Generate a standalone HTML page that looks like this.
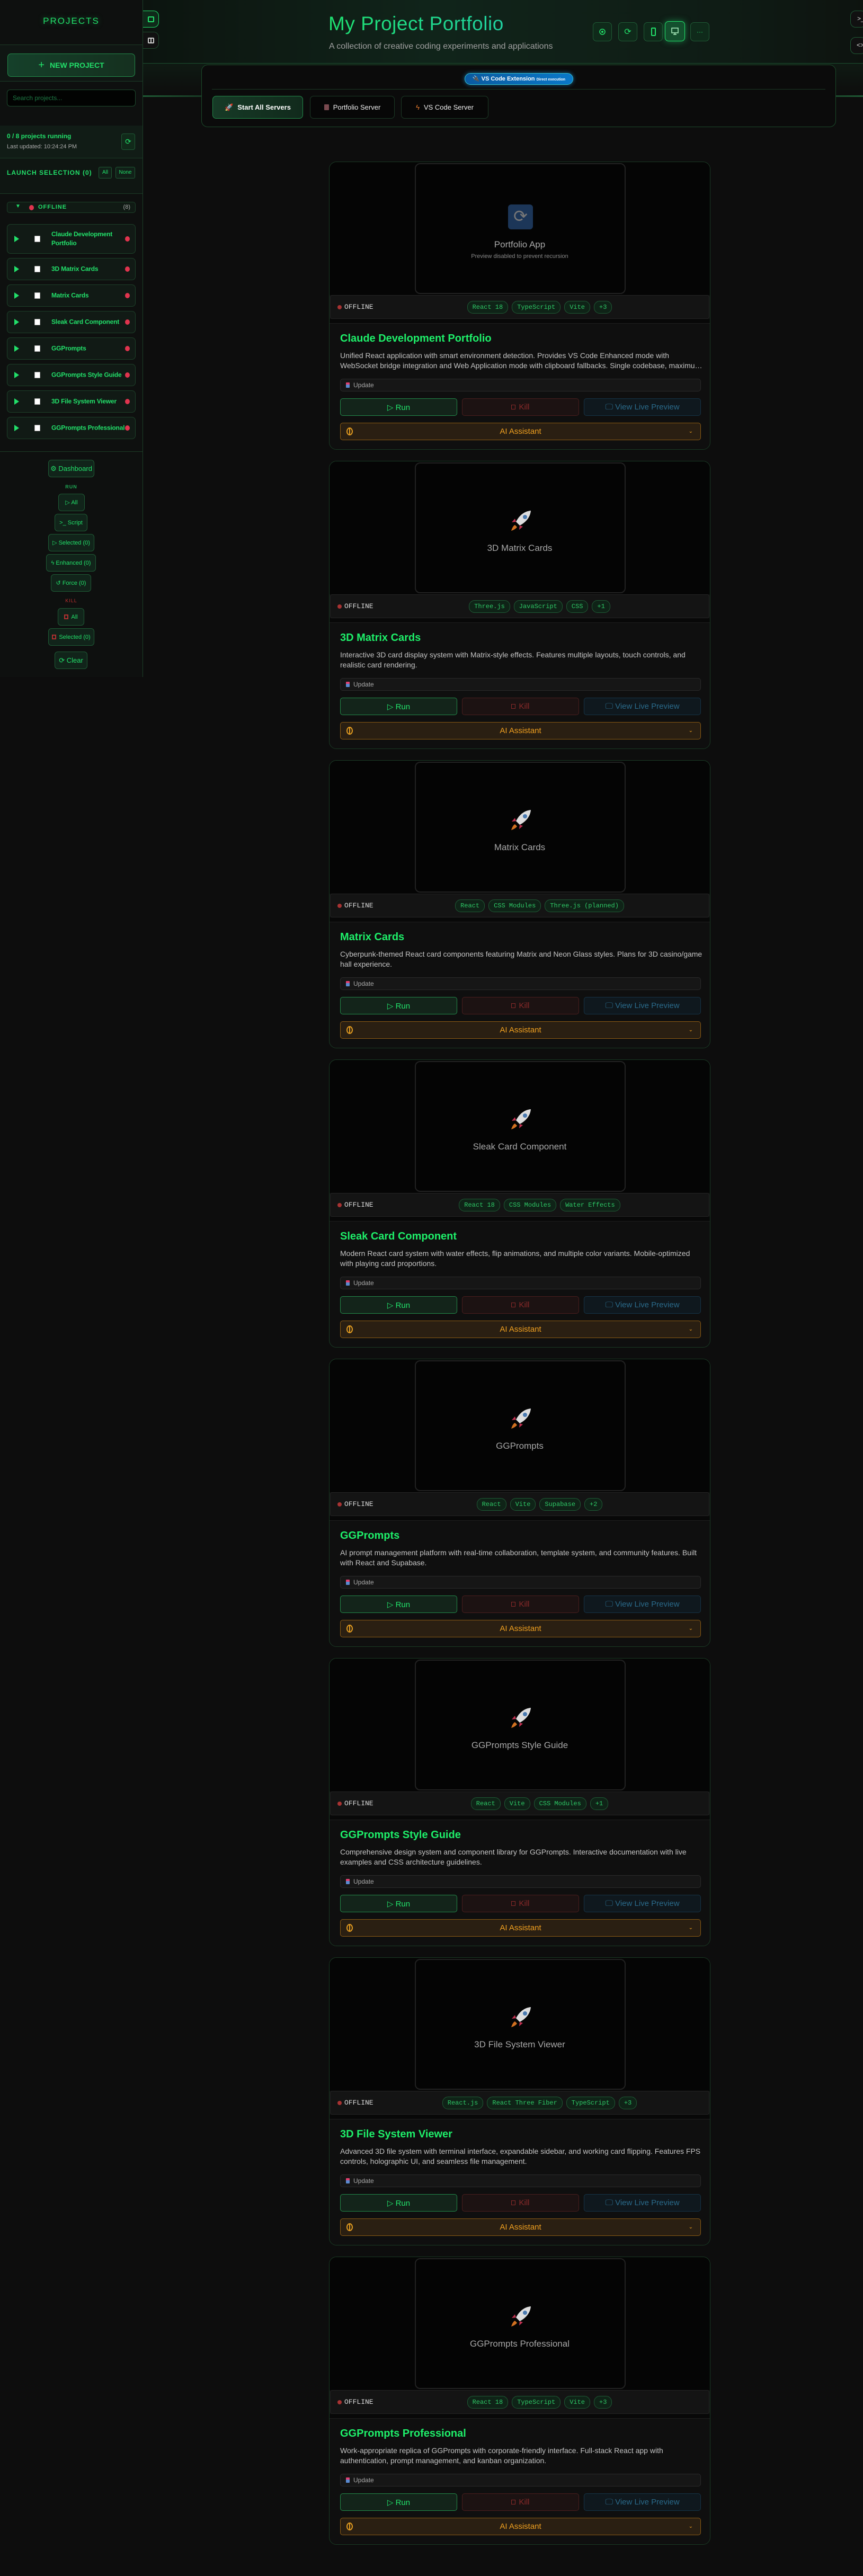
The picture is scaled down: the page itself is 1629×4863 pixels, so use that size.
<!DOCTYPE html>
<html><head><meta charset="utf-8">
<style>
*{box-sizing:border-box;margin:0;padding:0}
html,body{width:1629px;height:4863px;background:#0d0d0d;font-family:"Liberation Sans",sans-serif;overflow:hidden;position:relative}
.abs{position:absolute}
#side{left:0;top:0;width:270px;height:1278px;background:#0e100f;border-right:1px solid #1c4028}
.hl{position:absolute;left:0;width:269px;height:1px;background:#1c3a26}
.sbtn{position:absolute;border:1px solid #1f5a35;background:#11241a;border-radius:6px;color:#22e06a;font-size:13px;display:flex;align-items:center;justify-content:center;gap:5px}
.item{position:absolute;left:13px;width:243px;border:1px solid #1d4029;background:#111a15;border-radius:7px}
.item .pl{position:absolute;left:13px;top:50%;margin-top:-6px;width:0;height:0;border-left:9px solid #22e06a;border-top:6px solid transparent;border-bottom:6px solid transparent}
.item .cb{position:absolute;left:38px;top:50%;margin-top:-6px;width:11px;height:12px;background:#fff;border:1px solid #aaa;border-radius:1px}
.item .nm{position:absolute;left:70px;top:50%;transform:translateY(-50%);color:#22e06a;font-size:12px;font-weight:bold;line-height:17px;width:150px;white-space:nowrap;letter-spacing:-0.2px}
.item .rd{position:absolute;top:50%;margin-top:-5px;width:9px;height:10px;border-radius:50%;background:#e0344e;right:10px}
.card{position:absolute;left:621px;width:720px;height:544px;border:1px solid #1a3a24;border-radius:14px;background:#0f0f0f;overflow:hidden}
.pv{position:absolute;left:0;top:0;width:100%;height:251px;background:#050505}
.fr{position:absolute;left:161px;top:2px;width:398px;height:247px;border:2px solid #222;border-radius:10px;background:#040404}
.pname{position:absolute;left:0;width:100%;text-align:center;color:#a8a8a8;font-size:17px}
.sb{position:absolute;left:1px;right:1px;top:251px;height:45px;background:#141414;border:1px solid #242424;border-radius:4px}
.off{position:absolute;left:13px;top:14px;color:#ddd;font-family:"Liberation Mono",monospace;font-size:13px;display:flex;align-items:center;gap:5px}
.off i{display:inline-block;width:8px;height:8px;border-radius:50%;background:#a83232}
.tags{position:absolute;left:75px;right:0;top:10px;display:flex;justify-content:center;gap:7px}
.tag{height:24px;line-height:22px;padding:0 9px;border:1px solid #1f5a35;background:#0f2317;border-radius:11px;color:#2ec866;font-family:"Liberation Mono",monospace;font-size:12px}
.gap{position:absolute;left:0;right:0;top:296px;height:9px;background:#080808;border-bottom:1px solid #1e1e1e}
.ttl{position:absolute;left:20px;top:322px;color:#1ef06a;font-size:20px;font-weight:bold}
.ds{position:absolute;left:20px;width:685px;top:356px;color:#c4c4c4;font-size:14px;line-height:19px}
.ds div{white-space:nowrap;overflow:hidden;text-overflow:ellipsis}
.up{position:absolute;left:20px;width:681px;top:409px;height:24px;border:1px solid #2a2a2a;background:#161616;border-radius:5px;color:#aaa;font-size:12px;line-height:22px;padding-left:24px}
.up:before{content:"";position:absolute;left:10px;top:6px;width:7px;height:10px;background:linear-gradient(#e04070 40%,#5a8ad0 40%);border-radius:1px}
.bt{position:absolute;top:446px;height:33px;width:221px;border-radius:5px;display:flex;align-items:center;justify-content:center;gap:6px;font-size:15px}
.run{left:20px;border:1px solid #238a4a;background:#13241a;color:#22e06a}
.kill{left:250px;border:1px solid #4a1e1e;background:#1c1212;color:#8a2a2a}
.view{left:480px;border:1px solid #163447;background:#0f181e;color:#2a6a8a}
.ai{position:absolute;left:20px;width:681px;top:492px;height:33px;border:1px solid #8a5a14;background:#2a1f12;border-radius:5px;color:#f0a020;font-size:15px;text-align:center;line-height:31px}
.ai .b{position:absolute;left:11px;top:8px;width:12px;height:15px;border:2px solid #e09a20;border-radius:50%}
.ai .b:after{content:"";position:absolute;left:3px;top:0;width:2px;height:11px;background:#e09a20}
.ai .ch{position:absolute;right:14px;top:0;font-size:10px}
.hbtn{position:absolute;top:42px;width:36px;height:36px;border:1px solid #1f5a35;background:#0f2a1a;border-radius:7px;display:flex;align-items:center;justify-content:center}
.item .cb{left:38px}
</style></head><body>

<div class="abs" style="left:270px;top:0;width:1359px;height:120px;background:linear-gradient(90deg,#0c140f,#10241a 40%,#0f1c15 80%,#0d130f);border-bottom:1px solid #1c5030"></div>
<div class="abs" style="left:270px;top:120px;width:1359px;height:60px;background:linear-gradient(#0f1a13,#0d0d0d)"></div>
<div class="abs" style="left:270px;top:180px;width:1359px;height:3px;background:linear-gradient(90deg,#1f5a35,#0d0d0d 20%,#0d0d0d 80%,#1f5a35)"></div>

<div id="side" class="abs">
  <div class="abs" style="left:0;top:30px;width:269px;text-align:center;color:#22e06a;font-size:17px;letter-spacing:2px;text-shadow:0 0 10px #1a6a3a">PROJECTS</div>
  <div class="hl" style="top:84px"></div>
  <div class="abs" style="left:0;top:85px;width:269px;height:68px;background:#101613"></div>
  <div class="abs" style="left:14px;top:101px;width:241px;height:44px;border:1px solid #238a4a;border-radius:7px;background:linear-gradient(90deg,#15402a,#15301f);color:#22e06a;font-weight:bold;font-size:14px;display:flex;align-items:center;justify-content:center;gap:10px"><span style="font-size:20px;font-weight:normal">+</span>NEW PROJECT</div>
  <div class="hl" style="top:153px"></div>
  <div class="abs" style="left:13px;top:169px;width:243px;height:32px;border:1px solid #1d4a2e;border-radius:6px;background:#020302;color:#1e7a45;font-size:12px;line-height:30px;padding-left:10px">Search projects...</div>
  <div class="abs" style="left:0;top:237px;width:269px;height:61px;background:#111c16"></div>
  <div class="abs" style="left:13px;top:250px;color:#22e06a;font-size:12px;font-weight:bold">0 / 8 projects running</div>
  <div class="abs" style="left:13px;top:271px;color:#aaa;font-size:11px">Last updated: 10:24:24 PM</div>
  <div class="abs" style="left:229px;top:252px;width:26px;height:31px;border:1px solid #1f5a35;border-radius:4px;background:#112a1a;color:#22e06a;font-size:14px;text-align:center;line-height:29px">⟳</div>
  <div class="hl" style="top:298px"></div>
  <div class="abs" style="left:0;top:299px;width:269px;height:66px;background:#0f1612"></div>
  <div class="abs" style="left:13px;top:319px;color:#22e06a;font-size:12px;font-weight:bold;letter-spacing:1px">LAUNCH SELECTION (0)</div>
  <div class="abs" style="left:186px;top:315px;width:25px;height:22px;border:1px solid #1f5a35;border-radius:3px;background:#112018;color:#22e06a;font-size:10px;text-align:center;line-height:20px">All</div>
  <div class="abs" style="left:218px;top:315px;width:37px;height:22px;border:1px solid #1f5a35;border-radius:3px;background:#112018;color:#22e06a;font-size:10px;text-align:center;line-height:20px">None</div>
  <div class="hl" style="top:365px"></div>
  <div class="abs" style="left:13px;top:381px;width:243px;height:21px;border:1px solid #1d4029;border-radius:5px;background:#101a14">
    <span class="abs" style="left:15px;top:2px;color:#22e06a;font-size:10px">▼</span>
    <span class="abs" style="left:41px;top:5px;width:9px;height:10px;border-radius:50%;background:#e0344e"></span>
    <span class="abs" style="left:58px;top:3px;color:#22e06a;font-size:11px;font-weight:bold;letter-spacing:1px">OFFLINE</span>
    <span class="abs" style="right:9px;top:3px;color:#aaa;font-size:11px">(8)</span>
  </div>
  <div class="item" style="top:423px;height:56px"><i class="pl"></i><i class="cb"></i><div class="nm" style="white-space:normal;width:130px">Claude Development Portfolio</div><i class="rd"></i></div>
  <div class="item" style="top:487px;height:42px"><i class="pl"></i><i class="cb"></i><div class="nm">3D Matrix Cards</div><i class="rd"></i></div>
  <div class="item" style="top:537px;height:42px"><i class="pl"></i><i class="cb"></i><div class="nm">Matrix Cards</div><i class="rd"></i></div>
  <div class="item" style="top:587px;height:42px"><i class="pl"></i><i class="cb"></i><div class="nm">Sleak Card Component</div><i class="rd"></i></div>
  <div class="item" style="top:637px;height:42px"><i class="pl"></i><i class="cb"></i><div class="nm">GGPrompts</div><i class="rd"></i></div>
  <div class="item" style="top:687px;height:42px"><i class="pl"></i><i class="cb"></i><div class="nm">GGPrompts Style Guide</div><i class="rd"></i></div>
  <div class="item" style="top:737px;height:42px"><i class="pl"></i><i class="cb"></i><div class="nm">3D File System Viewer</div><i class="rd"></i></div>
  <div class="item" style="top:787px;height:42px"><i class="pl"></i><i class="cb"></i><div class="nm">GGPrompts Professional</div><i class="rd"></i></div>
  <div class="hl" style="top:852px"></div>
  <div class="sbtn" style="left:91px;top:868px;width:87px;height:33px">⚙ Dashboard</div>
  <div class="abs" style="left:0;width:269px;top:914px;text-align:center;color:#1fa855;font-size:9px;font-weight:bold;letter-spacing:1px">RUN</div>
  <div class="sbtn" style="left:110px;top:932px;width:50px;height:33px;font-size:11px">▷ All</div>
  <div class="sbtn" style="left:103px;top:970px;width:62px;height:33px;font-size:11px">&gt;_ Script</div>
  <div class="sbtn" style="left:91px;top:1008px;width:87px;height:33px;font-size:11px">▷ Selected (0)</div>
  <div class="sbtn" style="left:87px;top:1046px;width:94px;height:33px;font-size:11px">ϟ Enhanced (0)</div>
  <div class="sbtn" style="left:96px;top:1084px;width:76px;height:33px;font-size:11px">↺ Force (0)</div>
  <div class="abs" style="left:0;width:269px;top:1129px;text-align:center;color:#c03030;font-size:9px;letter-spacing:1px">KILL</div>
  <div class="sbtn" style="left:109px;top:1148px;width:50px;height:33px;font-size:11px"><i style="display:inline-block;width:8px;height:9px;border:2px solid #b03030"></i> All</div>
  <div class="sbtn" style="left:91px;top:1186px;width:87px;height:33px;font-size:11px"><i style="display:inline-block;width:8px;height:9px;border:2px solid #b03030"></i> Selected (0)</div>
  <div class="sbtn" style="left:103px;top:1230px;width:62px;height:33px">⟳ Clear</div>
</div>

<div class="abs" style="left:270px;top:20px;width:30px;height:32px;border:1px solid #22e06a;border-left:none;border-radius:0 10px 10px 0;background:#0f2a1a"><div style="position:absolute;left:9px;top:10px;width:12px;height:11px;border:2px solid #22e06a;border-radius:2px"></div></div>
<div class="abs" style="left:270px;top:60px;width:30px;height:32px;border:1px solid #1f4a2e;border-left:none;border-radius:0 10px 10px 0;background:#111"><div style="position:absolute;left:9px;top:10px;width:12px;height:11px;border:2px solid #ccc;border-radius:2px"></div><div style="position:absolute;left:14px;top:10px;width:2px;height:11px;background:#ccc"></div></div>
<div class="abs" style="left:1605px;top:20px;width:30px;height:32px;border:1px solid #1f5a35;border-radius:10px;background:#111;color:#ddd;font-size:12px;padding:7px 0 0 12px">&gt;_</div>
<div class="abs" style="left:1605px;top:70px;width:30px;height:32px;border:1px solid #1f5a35;border-radius:10px;background:#111;color:#ddd;font-size:12px;padding:7px 0 0 11px">&lt;&gt;</div>

<div class="abs" style="left:620px;top:24px;font-size:37px;font-weight:normal;color:#1fe07a;background:linear-gradient(90deg,#1fe070,#20d0a0);-webkit-background-clip:text;-webkit-text-fill-color:transparent;letter-spacing:0.5px">My Project Portfolio</div>
<div class="abs" style="left:621px;top:79px;font-size:16px;color:#a0a0a0">A collection of creative coding experiments and applications</div>
<div class="hbtn" style="left:1119px"><svg width="14" height="14" viewBox="0 0 14 14"><circle cx="7" cy="7" r="5" fill="none" stroke="#22e06a" stroke-width="1.5"/><circle cx="7" cy="7" r="2" fill="#22e06a"/></svg></div>
<div class="hbtn" style="left:1167px;color:#22e06a;font-size:16px">⟳</div>
<div class="hbtn" style="left:1215px"><div style="width:9px;height:16px;border:2px solid #22e06a;border-radius:2px"></div></div>
<div class="hbtn" style="left:1255px;top:40px;width:38px;height:38px;border-color:#22e06a;background:#14502e;box-shadow:0 0 12px #1a7a44"><svg width="16" height="16" viewBox="0 0 16 16"><rect x="2" y="2" width="12" height="9" fill="none" stroke="#aff0c0" stroke-width="1.5"/><path d="M8 11v3M5 14h6" stroke="#aff0c0" stroke-width="1.5"/></svg></div>
<div class="hbtn" style="left:1303px;color:#22e06a;font-size:12px">···</div>

<div class="abs" style="left:380px;top:122px;width:1198px;height:118px;border:1px solid #1c4a2a;border-radius:12px;background:#0b0b0b"></div>
<div class="abs" style="left:877px;top:138px;width:205px;height:22px;border:1px solid #30c0d0;border-radius:11px;background:linear-gradient(90deg,#0a5aa0,#0a78c8);color:#fff;font-size:11px;font-weight:bold;line-height:20px;text-align:center;box-shadow:0 0 8px #1a6a9a">🔌 VS Code Extension <span style="font-size:7px">Direct execution</span></div>
<div class="abs" style="left:400px;top:168px;width:1158px;height:1px;background:#1c3a26"></div>
<div class="abs" style="left:401px;top:181px;width:171px;height:43px;border:1px solid #238a4a;border-radius:7px;background:linear-gradient(90deg,#163a26,#112a1c);color:#fff;font-weight:bold;font-size:13px;display:flex;align-items:center;justify-content:center;gap:8px"><span style="color:#e05070">🚀</span>Start All Servers</div>
<div class="abs" style="left:585px;top:181px;width:160px;height:43px;border:1px solid #1c3a26;border-radius:7px;background:#070707;color:#eee;font-size:13px;display:flex;align-items:center;justify-content:center;gap:8px"><i style="display:inline-block;width:9px;height:11px;background:#7a4a50;border-radius:1px"></i>Portfolio Server</div>
<div class="abs" style="left:757px;top:181px;width:165px;height:43px;border:1px solid #1c3a26;border-radius:7px;background:#070707;color:#eee;font-size:13px;display:flex;align-items:center;justify-content:center;gap:8px"><span style="color:#f08030">ϟ</span>VS Code Server</div>

<div class="card" style="top:305px">
  <div class="pv"><div class="fr"></div>
    <div class="abs" style="left:337px;top:80px;width:47px;height:47px;background:#1c3658;border-radius:6px;color:#777;font-size:32px;text-align:center;line-height:45px">⟳</div>
    <div class="pname" style="top:146px">Portfolio App</div>
    <div class="pname" style="top:172px;font-size:11px;color:#888">Preview disabled to prevent recursion</div>
  </div>
  <div class="sb"><div class="off"><i></i>OFFLINE</div><div class="tags"><span class="tag">React 18</span><span class="tag">TypeScript</span><span class="tag">Vite</span><span class="tag">+3</span></div></div>
  <div class="gap"></div>
  <div class="ttl">Claude Development Portfolio</div>
  <div class="ds"><div>Unified React application with smart environment detection. Provides VS Code Enhanced mode with</div><div>WebSocket bridge integration and Web Application mode with clipboard fallbacks. Single codebase, maximum compatibility.</div></div>
  <div class="up">Update</div>
  <div class="bt run">▷ Run</div><div class="bt kill"><i style="display:inline-block;width:8px;height:9px;border:1.5px solid #8a2a2a"></i> Kill</div><div class="bt view">🖵 View Live Preview</div>
  <div class="ai"><i class="b"></i>AI Assistant<span class="ch">⌄</span></div>
</div>

<div class="card" style="top:870px">
  <div class="pv"><div class="fr"></div>
    <svg class="abs" style="left:338px;top:90px" width="45" height="45" viewBox="0 0 45 45"><path d="M42 3 C30 4 20 12 14 24 L21 31 C33 25 41 15 42 3Z" fill="#ddd"/><circle cx="31" cy="15" r="4" fill="#4a7ab0"/><path d="M14 24 L6 25 L12 18 Z M21 31 L20 39 L27 33Z" fill="#c03050"/><path d="M12 30 C8 32 6 38 5 41 C9 40 14 37 16 34Z" fill="#d07020"/></svg>
    <div class="pname" style="top:154px">3D Matrix Cards</div></div>
  <div class="sb"><div class="off"><i></i>OFFLINE</div><div class="tags"><span class="tag">Three.js</span><span class="tag">JavaScript</span><span class="tag">CSS</span><span class="tag">+1</span></div></div>
  <div class="gap"></div>
  <div class="ttl">3D Matrix Cards</div>
  <div class="ds"><div>Interactive 3D card display system with Matrix-style effects. Features multiple layouts, touch controls, and</div><div>realistic card rendering.</div></div>
  <div class="up">Update</div>
  <div class="bt run">▷ Run</div><div class="bt kill"><i style="display:inline-block;width:8px;height:9px;border:1.5px solid #8a2a2a"></i> Kill</div><div class="bt view">🖵 View Live Preview</div>
  <div class="ai"><i class="b"></i>AI Assistant<span class="ch">⌄</span></div>
</div>

<div class="card" style="top:1435px">
  <div class="pv"><div class="fr"></div>
    <svg class="abs" style="left:338px;top:90px" width="45" height="45" viewBox="0 0 45 45"><path d="M42 3 C30 4 20 12 14 24 L21 31 C33 25 41 15 42 3Z" fill="#ddd"/><circle cx="31" cy="15" r="4" fill="#4a7ab0"/><path d="M14 24 L6 25 L12 18 Z M21 31 L20 39 L27 33Z" fill="#c03050"/><path d="M12 30 C8 32 6 38 5 41 C9 40 14 37 16 34Z" fill="#d07020"/></svg>
    <div class="pname" style="top:154px">Matrix Cards</div></div>
  <div class="sb"><div class="off"><i></i>OFFLINE</div><div class="tags"><span class="tag">React</span><span class="tag">CSS Modules</span><span class="tag">Three.js (planned)</span></div></div>
  <div class="gap"></div>
  <div class="ttl">Matrix Cards</div>
  <div class="ds"><div>Cyberpunk-themed React card components featuring Matrix and Neon Glass styles. Plans for 3D casino/game</div><div>hall experience.</div></div>
  <div class="up">Update</div>
  <div class="bt run">▷ Run</div><div class="bt kill"><i style="display:inline-block;width:8px;height:9px;border:1.5px solid #8a2a2a"></i> Kill</div><div class="bt view">🖵 View Live Preview</div>
  <div class="ai"><i class="b"></i>AI Assistant<span class="ch">⌄</span></div>
</div>

<div class="card" style="top:2000px">
  <div class="pv"><div class="fr"></div>
    <svg class="abs" style="left:338px;top:90px" width="45" height="45" viewBox="0 0 45 45"><path d="M42 3 C30 4 20 12 14 24 L21 31 C33 25 41 15 42 3Z" fill="#ddd"/><circle cx="31" cy="15" r="4" fill="#4a7ab0"/><path d="M14 24 L6 25 L12 18 Z M21 31 L20 39 L27 33Z" fill="#c03050"/><path d="M12 30 C8 32 6 38 5 41 C9 40 14 37 16 34Z" fill="#d07020"/></svg>
    <div class="pname" style="top:154px">Sleak Card Component</div></div>
  <div class="sb"><div class="off"><i></i>OFFLINE</div><div class="tags"><span class="tag">React 18</span><span class="tag">CSS Modules</span><span class="tag">Water Effects</span></div></div>
  <div class="gap"></div>
  <div class="ttl">Sleak Card Component</div>
  <div class="ds"><div>Modern React card system with water effects, flip animations, and multiple color variants. Mobile-optimized</div><div>with playing card proportions.</div></div>
  <div class="up">Update</div>
  <div class="bt run">▷ Run</div><div class="bt kill"><i style="display:inline-block;width:8px;height:9px;border:1.5px solid #8a2a2a"></i> Kill</div><div class="bt view">🖵 View Live Preview</div>
  <div class="ai"><i class="b"></i>AI Assistant<span class="ch">⌄</span></div>
</div>

<div class="card" style="top:2565px">
  <div class="pv"><div class="fr"></div>
    <svg class="abs" style="left:338px;top:90px" width="45" height="45" viewBox="0 0 45 45"><path d="M42 3 C30 4 20 12 14 24 L21 31 C33 25 41 15 42 3Z" fill="#ddd"/><circle cx="31" cy="15" r="4" fill="#4a7ab0"/><path d="M14 24 L6 25 L12 18 Z M21 31 L20 39 L27 33Z" fill="#c03050"/><path d="M12 30 C8 32 6 38 5 41 C9 40 14 37 16 34Z" fill="#d07020"/></svg>
    <div class="pname" style="top:154px">GGPrompts</div></div>
  <div class="sb"><div class="off"><i></i>OFFLINE</div><div class="tags"><span class="tag">React</span><span class="tag">Vite</span><span class="tag">Supabase</span><span class="tag">+2</span></div></div>
  <div class="gap"></div>
  <div class="ttl">GGPrompts</div>
  <div class="ds"><div>AI prompt management platform with real-time collaboration, template system, and community features. Built</div><div>with React and Supabase.</div></div>
  <div class="up">Update</div>
  <div class="bt run">▷ Run</div><div class="bt kill"><i style="display:inline-block;width:8px;height:9px;border:1.5px solid #8a2a2a"></i> Kill</div><div class="bt view">🖵 View Live Preview</div>
  <div class="ai"><i class="b"></i>AI Assistant<span class="ch">⌄</span></div>
</div>

<div class="card" style="top:3130px">
  <div class="pv"><div class="fr"></div>
    <svg class="abs" style="left:338px;top:90px" width="45" height="45" viewBox="0 0 45 45"><path d="M42 3 C30 4 20 12 14 24 L21 31 C33 25 41 15 42 3Z" fill="#ddd"/><circle cx="31" cy="15" r="4" fill="#4a7ab0"/><path d="M14 24 L6 25 L12 18 Z M21 31 L20 39 L27 33Z" fill="#c03050"/><path d="M12 30 C8 32 6 38 5 41 C9 40 14 37 16 34Z" fill="#d07020"/></svg>
    <div class="pname" style="top:154px">GGPrompts Style Guide</div></div>
  <div class="sb"><div class="off"><i></i>OFFLINE</div><div class="tags"><span class="tag">React</span><span class="tag">Vite</span><span class="tag">CSS Modules</span><span class="tag">+1</span></div></div>
  <div class="gap"></div>
  <div class="ttl">GGPrompts Style Guide</div>
  <div class="ds"><div>Comprehensive design system and component library for GGPrompts. Interactive documentation with live</div><div>examples and CSS architecture guidelines.</div></div>
  <div class="up">Update</div>
  <div class="bt run">▷ Run</div><div class="bt kill"><i style="display:inline-block;width:8px;height:9px;border:1.5px solid #8a2a2a"></i> Kill</div><div class="bt view">🖵 View Live Preview</div>
  <div class="ai"><i class="b"></i>AI Assistant<span class="ch">⌄</span></div>
</div>

<div class="card" style="top:3695px">
  <div class="pv"><div class="fr"></div>
    <svg class="abs" style="left:338px;top:90px" width="45" height="45" viewBox="0 0 45 45"><path d="M42 3 C30 4 20 12 14 24 L21 31 C33 25 41 15 42 3Z" fill="#ddd"/><circle cx="31" cy="15" r="4" fill="#4a7ab0"/><path d="M14 24 L6 25 L12 18 Z M21 31 L20 39 L27 33Z" fill="#c03050"/><path d="M12 30 C8 32 6 38 5 41 C9 40 14 37 16 34Z" fill="#d07020"/></svg>
    <div class="pname" style="top:154px">3D File System Viewer</div></div>
  <div class="sb"><div class="off"><i></i>OFFLINE</div><div class="tags"><span class="tag">React.js</span><span class="tag">React Three Fiber</span><span class="tag">TypeScript</span><span class="tag">+3</span></div></div>
  <div class="gap"></div>
  <div class="ttl">3D File System Viewer</div>
  <div class="ds"><div>Advanced 3D file system with terminal interface, expandable sidebar, and working card flipping. Features FPS</div><div>controls, holographic UI, and seamless file management.</div></div>
  <div class="up">Update</div>
  <div class="bt run">▷ Run</div><div class="bt kill"><i style="display:inline-block;width:8px;height:9px;border:1.5px solid #8a2a2a"></i> Kill</div><div class="bt view">🖵 View Live Preview</div>
  <div class="ai"><i class="b"></i>AI Assistant<span class="ch">⌄</span></div>
</div>

<div class="card" style="top:4260px">
  <div class="pv"><div class="fr"></div>
    <svg class="abs" style="left:338px;top:90px" width="45" height="45" viewBox="0 0 45 45"><path d="M42 3 C30 4 20 12 14 24 L21 31 C33 25 41 15 42 3Z" fill="#ddd"/><circle cx="31" cy="15" r="4" fill="#4a7ab0"/><path d="M14 24 L6 25 L12 18 Z M21 31 L20 39 L27 33Z" fill="#c03050"/><path d="M12 30 C8 32 6 38 5 41 C9 40 14 37 16 34Z" fill="#d07020"/></svg>
    <div class="pname" style="top:154px">GGPrompts Professional</div></div>
  <div class="sb"><div class="off"><i></i>OFFLINE</div><div class="tags"><span class="tag">React 18</span><span class="tag">TypeScript</span><span class="tag">Vite</span><span class="tag">+3</span></div></div>
  <div class="gap"></div>
  <div class="ttl">GGPrompts Professional</div>
  <div class="ds"><div>Work-appropriate replica of GGPrompts with corporate-friendly interface. Full-stack React app with</div><div>authentication, prompt management, and kanban organization.</div></div>
  <div class="up">Update</div>
  <div class="bt run">▷ Run</div><div class="bt kill"><i style="display:inline-block;width:8px;height:9px;border:1.5px solid #8a2a2a"></i> Kill</div><div class="bt view">🖵 View Live Preview</div>
  <div class="ai"><i class="b"></i>AI Assistant<span class="ch">⌄</span></div>
</div>

<style>.item .cb{left:51px}.item .nm{left:83px}</style>
</body></html>
